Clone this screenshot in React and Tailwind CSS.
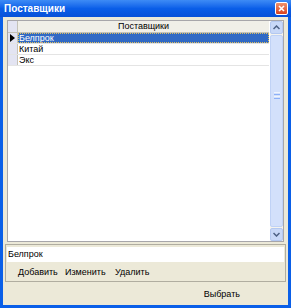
import React from 'react';

const rows = ['Белпрок', 'Китай', 'Экс'];

const App = () => {
  return (
    <div className="w-[291px] h-[308px] flex flex-col bg-[#0a5fe8] font-['Liberation_Sans',Arial,sans-serif] text-[9px] text-black overflow-hidden">
      {/* Title bar */}
      <div className="h-[17px] flex items-center justify-between pl-[4px] pr-[3px] bg-gradient-to-b from-[#3d8bf5] via-[#0a5ee8] to-[#0851d8]">
        <span className="text-white font-bold text-[10px] leading-none">Поставщики</span>
        <div className="w-[13px] h-[13px] rounded-[2px] border border-white bg-gradient-to-b from-[#f0906a] to-[#d8401c] flex items-center justify-center">
          <svg width="7" height="7" viewBox="0 0 7 7">
            <path d="M1 1 L6 6 M6 1 L1 6" stroke="white" strokeWidth="1.6" />
          </svg>
        </div>
      </div>

      {/* Client area */}
      <div className="flex-1 mx-[3px] mb-[3px] bg-[#ece9d8] flex flex-col px-[4px] pt-[3px]">
        {/* Grid */}
        <div className="h-[222px] flex bg-white border border-[#a7a6aa]">
          <div className="flex-1 flex flex-col">
            <div className="h-[12px] flex bg-[#ece9d8] border-b border-[#c4c2b8]">
              <div className="w-[10px] border-r border-[#c4c2b8] bg-[#e3e4f2]"></div>
              <div className="flex-1 flex items-center justify-center leading-none bg-[#f0efe8]">Поставщики</div>
            </div>
            {rows.map((r, i) => (
              <div key={r} className="h-[11px] flex border-b border-[#e4e4e4]">
                <div className="w-[10px] border-r border-[#c4c2b8] bg-[#e3e4f2] flex items-center justify-center">
                  {i === 0 && (
                    <svg width="5" height="8" viewBox="0 0 5 8">
                      <path d="M0 0 L5 4 L0 8 Z" fill="black" />
                    </svg>
                  )}
                </div>
                <div
                  className={
                    i === 0
                      ? 'flex-1 flex items-center pl-[1px] leading-none bg-[#316ac5] text-white outline outline-1 outline-dotted outline-[#e0c060] -outline-offset-1'
                      : 'flex-1 flex items-center pl-[1px] leading-none'
                  }
                >
                  {r}
                </div>
              </div>
            ))}
          </div>
          {/* Scrollbar */}
          <div className="w-[13px] flex flex-col bg-[#f4f3ee] ml-[1px]">
            <div className="h-[13px] rounded-[2px] bg-[#c8d8f8] border border-[#b4c8f0] flex items-center justify-center">
              <svg width="7" height="5" viewBox="0 0 7 5">
                <path d="M0.5 4 L3.5 1 L6.5 4" stroke="#4d6185" strokeWidth="1.5" fill="none" />
              </svg>
            </div>
            <div className="flex-1 mt-[1px] mb-[1px] rounded-[2px] bg-[#d3e0fb] border border-[#c0d2f6] flex flex-col items-center pt-[56px]">
              <div className="w-[6px] flex flex-col gap-[1px]">
                <div className="h-[1px] bg-[#eef4fe]"></div>
                <div className="h-[1px] bg-[#8cb0f8]"></div>
                <div className="h-[1px] bg-[#eef4fe]"></div>
                <div className="h-[1px] bg-[#8cb0f8]"></div>
              </div>
            </div>
            <div className="h-[13px] rounded-[2px] bg-[#c8d8f8] border border-[#b4c8f0] flex items-center justify-center">
              <svg width="7" height="5" viewBox="0 0 7 5">
                <path d="M0.5 1 L3.5 4 L6.5 1" stroke="#4d6185" strokeWidth="1.5" fill="none" />
              </svg>
            </div>
          </div>
        </div>

        {/* Edit group */}
        <div className="mt-[2px] -mx-[2px] border border-[#b0ada0] flex flex-col px-[1px] pt-[2px] pb-[4px]">
          <div className="h-[15px] bg-white flex items-center pl-[1px] leading-none">Белпрок</div>
          <div className="flex pl-[11px] mt-[6px] leading-none">
            <span className="w-[47px]">Добавить</span>
            <span className="w-[50px]">Изменить</span>
            <span>Удалить</span>
          </div>
        </div>

        <div className="flex justify-end pr-[44px] mt-[8px] leading-none">
          <span>Выбрать</span>
        </div>
      </div>
    </div>
  );
};

export default App;
